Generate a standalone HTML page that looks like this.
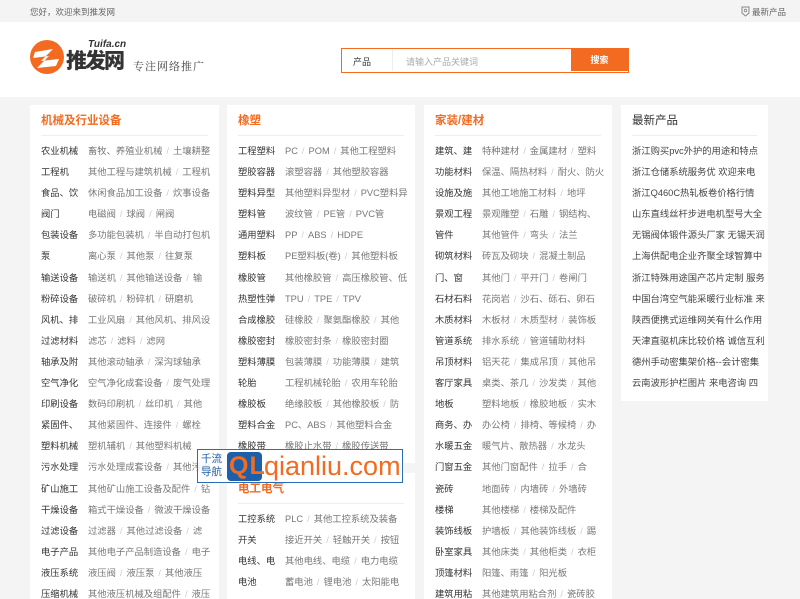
<!DOCTYPE html>
<html><head><meta charset="utf-8"><style>
*{margin:0;padding:0;box-sizing:border-box}
body{width:800px;height:599px;overflow:hidden;background:#f4f4f4;font-family:"Liberation Sans","Noto Sans CJK SC",sans-serif;position:relative}
.top{height:22px;background:#f4f4f4;font-size:8.5px;color:#666;position:relative}
.top .l{position:absolute;left:30px;top:6px}
.top .r{position:absolute;left:741px;top:6px}
.hd{position:absolute;top:22px;left:0;width:800px;height:75px;background:#fff}
.card{position:absolute;background:#fff;overflow:hidden}
.card h3{height:31px;line-height:33px;margin:0 11px;font-size:11.5px;font-weight:bold;color:#f26b21;border-bottom:1px solid #eee}
.card h3.g{color:#333;font-weight:normal}
.rows{padding-top:5px}
.row{height:21.1px;line-height:21px;font-size:9.3px;white-space:nowrap;padding-left:11px;color:#777}
.row b{display:inline-block;width:47px;color:#333;font-weight:normal}
.row i{font-style:normal;color:#ccc;margin:0 4px}
.n .row{color:#444}
</style></head><body>
<div class="top"><span class="l">您好，欢迎来到推发网</span>
<span class="r"><svg width="9" height="11" viewBox="0 0 9 11" style="vertical-align:-2px;margin-right:2px"><path d="M1 1h7v6l-3.5 3L1 7z" fill="none" stroke="#888"/><circle cx="4.5" cy="4.5" r="1.3" fill="none" stroke="#888" stroke-width=".8"/></svg>最新产品</span></div>
<div class="hd">
<svg style="position:absolute;left:29px;top:17px" width="36" height="36" viewBox="0 0 36 36"><circle cx="18" cy="18" r="17" fill="#f26b21"/><path d="M6 13 L24 10 L12 22 L30 20 L27 27 L8 29 L20 17 L4 19 Z" fill="#fff"/></svg>
<div style="position:absolute;left:88px;top:17px;font:italic bold 10px 'Liberation Sans';color:#333">Tuifa.cn</div>
<div style="position:absolute;left:66px;top:27px;font-size:21px;line-height:26px;font-weight:900;color:#333;letter-spacing:-2px">推发网</div>
<div style="position:absolute;left:133px;top:36px;font-size:11px;color:#444;font-family:'Noto Serif CJK SC',serif;letter-spacing:1px">专注网络推广</div>
<div style="position:absolute;left:341px;top:26px;width:288px;height:25px;border:1.5px solid #f26b21;background:#fff">
<span style="position:absolute;left:11px;top:6px;font-size:9px;color:#333">产品</span>
<span style="position:absolute;left:50px;top:0;height:22px;border-left:1px solid #eee"></span>
<span style="position:absolute;left:64px;top:6px;font-size:9px;color:#aaa">请输入产品关键词</span>
<span style="position:absolute;right:0;top:0;width:57px;height:22px;background:#f26b21;color:#fff;font-size:9px;font-weight:bold;text-align:center;line-height:22px">搜索</span></div>
</div>

<div class="card" style="left:30px;top:105px;width:189px;height:494px">
<h3>机械及行业设备</h3><div class="rows">
<div class="row"><b>农业机械</b>畜牧、养殖业机械<i>/</i>土壤耕整</div>
<div class="row"><b>工程机</b>其他工程与建筑机械<i>/</i>工程机</div>
<div class="row"><b>食品、饮</b>休闲食品加工设备<i>/</i>炊事设备</div>
<div class="row"><b>阀门</b>电磁阀<i>/</i>球阀<i>/</i>闸阀</div>
<div class="row"><b>包装设备</b>多功能包装机<i>/</i>半自动打包机</div>
<div class="row"><b>泵</b>离心泵<i>/</i>其他泵<i>/</i>往复泵</div>
<div class="row"><b>输送设备</b>输送机<i>/</i>其他输送设备<i>/</i>输</div>
<div class="row"><b>粉碎设备</b>破碎机<i>/</i>粉碎机<i>/</i>研磨机</div>
<div class="row"><b>风机、排</b>工业风扇<i>/</i>其他风机、排风设</div>
<div class="row"><b>过滤材料</b>滤芯<i>/</i>滤料<i>/</i>滤网</div>
<div class="row"><b>轴承及附</b>其他滚动轴承<i>/</i>深沟球轴承</div>
<div class="row"><b>空气净化</b>空气净化成套设备<i>/</i>废气处理</div>
<div class="row"><b>印刷设备</b>数码印刷机<i>/</i>丝印机<i>/</i>其他</div>
<div class="row"><b>紧固件、</b>其他紧固件、连接件<i>/</i>螺栓</div>
<div class="row"><b>塑料机械</b>塑机辅机<i>/</i>其他塑料机械</div>
<div class="row"><b>污水处理</b>污水处理成套设备<i>/</i>其他污水</div>
<div class="row"><b>矿山施工</b>其他矿山施工设备及配件<i>/</i>钻</div>
<div class="row"><b>干燥设备</b>箱式干燥设备<i>/</i>微波干燥设备</div>
<div class="row"><b>过滤设备</b>过滤器<i>/</i>其他过滤设备<i>/</i>滤</div>
<div class="row"><b>电子产品</b>其他电子产品制造设备<i>/</i>电子</div>
<div class="row"><b>液压系统</b>液压阀<i>/</i>液压泵<i>/</i>其他液压</div>
<div class="row"><b>压缩机械</b>其他液压机械及组配件<i>/</i>液压</div>
</div></div>

<div class="card" style="left:227px;top:105px;width:188px;height:358px">
<h3>橡塑</h3><div class="rows">
<div class="row"><b>工程塑料</b>PC<i>/</i>POM<i>/</i>其他工程塑料</div>
<div class="row"><b>塑胶容器</b>滚塑容器<i>/</i>其他塑胶容器</div>
<div class="row"><b>塑料异型</b>其他塑料异型材<i>/</i>PVC塑料异</div>
<div class="row"><b>塑料管</b>波纹管<i>/</i>PE管<i>/</i>PVC管</div>
<div class="row"><b>通用塑料</b>PP<i>/</i>ABS<i>/</i>HDPE</div>
<div class="row"><b>塑料板</b>PE塑料板(卷)<i>/</i>其他塑料板</div>
<div class="row"><b>橡胶管</b>其他橡胶管<i>/</i>高压橡胶管、低</div>
<div class="row"><b>热塑性弹</b>TPU<i>/</i>TPE<i>/</i>TPV</div>
<div class="row"><b>合成橡胶</b>硅橡胶<i>/</i>聚氨酯橡胶<i>/</i>其他</div>
<div class="row"><b>橡胶密封</b>橡胶密封条<i>/</i>橡胶密封圈</div>
<div class="row"><b>塑料薄膜</b>包装薄膜<i>/</i>功能薄膜<i>/</i>建筑</div>
<div class="row"><b>轮胎</b>工程机械轮胎<i>/</i>农用车轮胎</div>
<div class="row"><b>橡胶板</b>绝缘胶板<i>/</i>其他橡胶板<i>/</i>防</div>
<div class="row"><b>塑料合金</b>PC、ABS<i>/</i>其他塑料合金</div>
<div class="row"><b>橡胶带</b>橡胶止水带<i>/</i>橡胶传送带</div>
</div></div>

<div class="card" style="left:227px;top:473px;width:188px;height:126px">
<h3>电工电气</h3><div class="rows">
<div class="row"><b>工控系统</b>PLC<i>/</i>其他工控系统及装备</div>
<div class="row"><b>开关</b>接近开关<i>/</i>轻触开关<i>/</i>按钮</div>
<div class="row"><b>电线、电</b>其他电线、电缆<i>/</i>电力电缆</div>
<div class="row"><b>电池</b>蓄电池<i>/</i>锂电池<i>/</i>太阳能电</div>
</div></div>

<div class="card" style="left:424px;top:105px;width:188px;height:494px">
<h3>家装/建材</h3><div class="rows">
<div class="row"><b>建筑、建</b>特种建材<i>/</i>金属建材<i>/</i>塑料</div>
<div class="row"><b>功能材料</b>保温、隔热材料<i>/</i>耐火、防火</div>
<div class="row"><b>设施及施</b>其他工地施工材料<i>/</i>地坪</div>
<div class="row"><b>景观工程</b>景观雕塑<i>/</i>石雕<i>/</i>钢结构、</div>
<div class="row"><b>管件</b>其他管件<i>/</i>弯头<i>/</i>法兰</div>
<div class="row"><b>砌筑材料</b>砖瓦及砌块<i>/</i>混凝土制品</div>
<div class="row"><b>门、窗</b>其他门<i>/</i>平开门<i>/</i>卷闸门</div>
<div class="row"><b>石材石料</b>花岗岩<i>/</i>沙石、砾石、卵石</div>
<div class="row"><b>木质材料</b>木板材<i>/</i>木质型材<i>/</i>装饰板</div>
<div class="row"><b>管道系统</b>排水系统<i>/</i>管道辅助材料</div>
<div class="row"><b>吊顶材料</b>铝天花<i>/</i>集成吊顶<i>/</i>其他吊</div>
<div class="row"><b>客厅家具</b>桌类、茶几<i>/</i>沙发类<i>/</i>其他</div>
<div class="row"><b>地板</b>塑料地板<i>/</i>橡胶地板<i>/</i>实木</div>
<div class="row"><b>商务、办</b>办公椅<i>/</i>排椅、等候椅<i>/</i>办</div>
<div class="row"><b>水暖五金</b>暖气片、散热器<i>/</i>水龙头</div>
<div class="row"><b>门窗五金</b>其他门窗配件<i>/</i>拉手<i>/</i>合</div>
<div class="row"><b>瓷砖</b>地面砖<i>/</i>内墙砖<i>/</i>外墙砖</div>
<div class="row"><b>楼梯</b>其他楼梯<i>/</i>楼梯及配件</div>
<div class="row"><b>装饰线板</b>护墙板<i>/</i>其他装饰线板<i>/</i>踢</div>
<div class="row"><b>卧室家具</b>其他床类<i>/</i>其他柜类<i>/</i>衣柜</div>
<div class="row"><b>顶篷材料</b>阳篷、雨篷<i>/</i>阳光板</div>
<div class="row"><b>建筑用粘</b>其他建筑用粘合剂<i>/</i>瓷砖胶</div>
</div></div>

<div class="card n" style="left:621px;top:105px;width:147px;height:296px">
<h3 class="g">最新产品</h3><div class="rows">
<div class="row">浙江购买pvc外护的用途和特点</div>
<div class="row">浙江仓储系统服务优 欢迎来电</div>
<div class="row">浙江Q460C热轧板卷价格行情</div>
<div class="row">山东直线丝杆步进电机型号大全</div>
<div class="row">无锡阀体锻件源头厂家 无锡天润</div>
<div class="row">上海供配电企业齐聚全球智算中</div>
<div class="row">浙江特殊用途国产芯片定制 服务</div>
<div class="row">中国台湾空气能采暖行业标准 来</div>
<div class="row">陕西便携式运维网关有什么作用</div>
<div class="row">天津直驱机床比较价格 诚信互利</div>
<div class="row">德州手动密集架价格--会计密集</div>
<div class="row">云南波形护栏图片 来电咨询 四</div>
</div></div>

<div style="position:absolute;left:197px;top:449px;width:206px;height:34px;border:1px solid #2a6db5;background:rgba(255,255,255,.85)">
<div style="position:absolute;left:3px;top:3px;font-size:10.5px;line-height:13px;color:#1d5fa8">千流<br>导航</div>
<div style="position:absolute;left:29px;top:2px;width:35px;height:29px;background:#1d5fa8;border-radius:4px"></div>
<div style="position:absolute;left:31px;top:1px;font-size:25px;font-weight:bold;line-height:30px;color:#f26b21;letter-spacing:1px">QL</div>
<div style="position:absolute;left:66px;top:-1px;font-size:27px;color:#f26b21;line-height:34px">qianliu.com</div>
</div>
</body></html>
